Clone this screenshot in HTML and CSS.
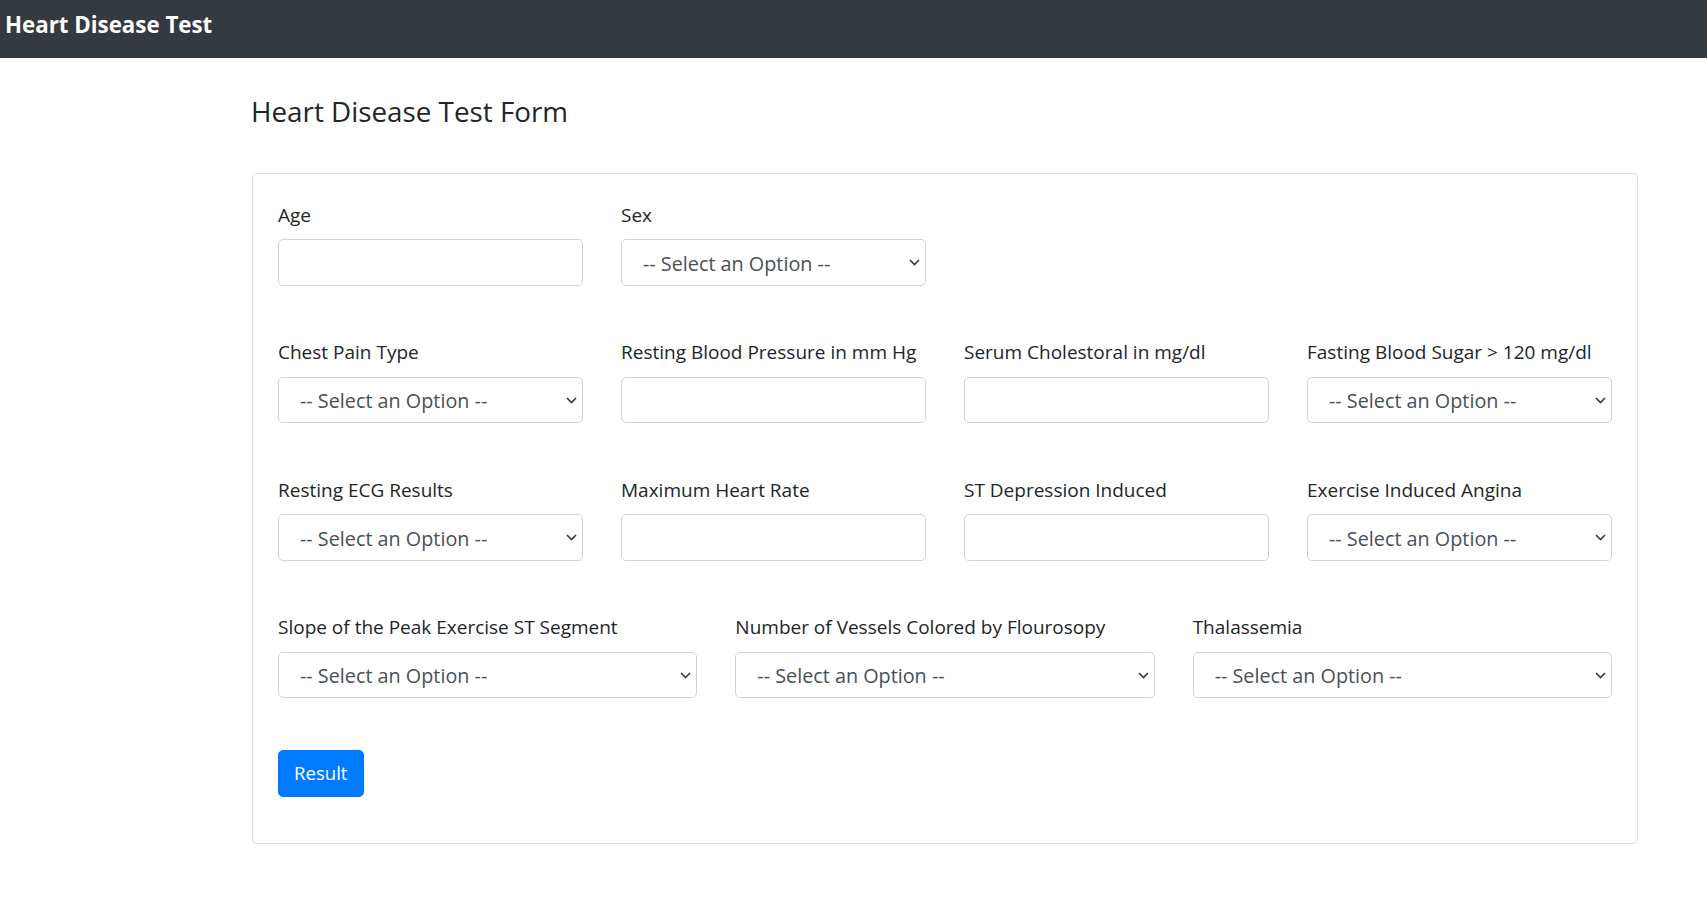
FILE: index.html
```html
<!DOCTYPE html>
<html lang="en">
<head>
<meta charset="utf-8">
<title>Heart Disease Test</title>
<link rel="stylesheet" href="styles.css">
</head>
<body>
<nav class="navbar"><a class="brand">Heart Disease Test</a></nav>
<main class="page">
  <h3 class="page-title">Heart Disease Test Form</h3>
  <div class="card">
    <form class="card-body">
      <div class="form-row">
        <div class="field"><label>Age</label><input class="control" type="text"></div>
        <div class="field"><label>Sex</label>
          <div class="select-wrap"><select class="control select"><option>-- Select an Option --</option></select><svg class="chev" width="11" height="7" viewBox="0 0 11 7"><polyline points="1,1 5.5,5.5 10,1" fill="none" stroke="#343a40" stroke-width="1.6"/></svg></div>
        </div>
      </div>
      <div class="form-row">
        <div class="field"><label>Chest Pain Type</label>
          <div class="select-wrap"><select class="control select"><option>-- Select an Option --</option></select><svg class="chev" width="11" height="7" viewBox="0 0 11 7"><polyline points="1,1 5.5,5.5 10,1" fill="none" stroke="#343a40" stroke-width="1.6"/></svg></div>
        </div>
        <div class="field"><label>Resting Blood Pressure in mm Hg</label><input class="control" type="text"></div>
        <div class="field"><label>Serum Cholestoral in mg/dl</label><input class="control" type="text"></div>
        <div class="field"><label>Fasting Blood Sugar &gt; 120 mg/dl</label>
          <div class="select-wrap"><select class="control select"><option>-- Select an Option --</option></select><svg class="chev" width="11" height="7" viewBox="0 0 11 7"><polyline points="1,1 5.5,5.5 10,1" fill="none" stroke="#343a40" stroke-width="1.6"/></svg></div>
        </div>
      </div>
      <div class="form-row">
        <div class="field"><label>Resting ECG Results</label>
          <div class="select-wrap"><select class="control select"><option>-- Select an Option --</option></select><svg class="chev" width="11" height="7" viewBox="0 0 11 7"><polyline points="1,1 5.5,5.5 10,1" fill="none" stroke="#343a40" stroke-width="1.6"/></svg></div>
        </div>
        <div class="field"><label>Maximum Heart Rate</label><input class="control" type="text"></div>
        <div class="field"><label>ST Depression Induced</label><input class="control" type="text"></div>
        <div class="field"><label>Exercise Induced Angina</label>
          <div class="select-wrap"><select class="control select"><option>-- Select an Option --</option></select><svg class="chev" width="11" height="7" viewBox="0 0 11 7"><polyline points="1,1 5.5,5.5 10,1" fill="none" stroke="#343a40" stroke-width="1.6"/></svg></div>
        </div>
      </div>
      <div class="form-row cols-3 last">
        <div class="field"><label>Slope of the Peak Exercise ST Segment</label>
          <div class="select-wrap"><select class="control select"><option>-- Select an Option --</option></select><svg class="chev" width="11" height="7" viewBox="0 0 11 7"><polyline points="1,1 5.5,5.5 10,1" fill="none" stroke="#343a40" stroke-width="1.6"/></svg></div>
        </div>
        <div class="field"><label>Number of Vessels Colored by Flourosopy</label>
          <div class="select-wrap"><select class="control select"><option>-- Select an Option --</option></select><svg class="chev" width="11" height="7" viewBox="0 0 11 7"><polyline points="1,1 5.5,5.5 10,1" fill="none" stroke="#343a40" stroke-width="1.6"/></svg></div>
        </div>
        <div class="field"><label>Thalassemia</label>
          <div class="select-wrap"><select class="control select"><option>-- Select an Option --</option></select><svg class="chev" width="11" height="7" viewBox="0 0 11 7"><polyline points="1,1 5.5,5.5 10,1" fill="none" stroke="#343a40" stroke-width="1.6"/></svg></div>
        </div>
      </div>
      <button class="btn" type="button">Result</button>
    </form>
  </div>
</main>
</body>
</html>
```
FILE: styles.css
```css
html, body {
  margin: 0;
  padding: 0;
  background: #fff;
}
body {
  font-family: "Open Sans", "Noto Sans", sans-serif;
  color: #212529;
}
.navbar {
  box-sizing: border-box;
  height: 57.7px;
  padding: 8.5px 0 0 5px;
  background: #343a40;
}
.brand {
  display: block;
  font-size: 22.3px;
  line-height: 32px;
  font-weight: 700;
  color: #fff;
  text-decoration: none;
}
.page {
  padding: 36px 0 0 252px;
}
.page-title {
  margin: 0 0 45.2px -1px;
  font-size: 27.8px;
  line-height: 34px;
  font-weight: 400;
  color: #212529;
}
.card {
  box-sizing: border-box;
  width: 1386px;
  border: 1px solid rgba(0, 0, 0, 0.125);
  border-radius: 5px;
  background: #fff;
}
.card-body {
  display: block;
  padding: 27px 25px 46.5px;
}
.form-row {
  display: grid;
  grid-template-columns: repeat(4, 1fr);
  column-gap: 38px;
  margin-bottom: 52.5px;
}
.form-row.cols-3 {
  grid-template-columns: repeat(3, 1fr);
}
.form-row.last {
  margin-bottom: 52.3px;
}
.field label {
  display: block;
  font-size: 19px;
  line-height: 28px;
  margin-bottom: 10.5px;
  color: #212529;
  white-space: nowrap;
}
.control {
  display: block;
  box-sizing: border-box;
  width: 100%;
  height: 46.4px;
  margin: 0;
  border: 1px solid #ced4da;
  border-radius: 5px;
  background: #fff;
  font-family: inherit;
  font-size: 19.8px;
  color: #495057;
  outline: none;
}
.select-wrap {
  position: relative;
}
.select {
  appearance: none;
  -webkit-appearance: none;
  padding: 2px 36px 0 21px;
}
.chev {
  position: absolute;
  right: 6px;
  top: 20px;
  pointer-events: none;
}
.btn {
  display: block;
  box-sizing: border-box;
  height: 46.5px;
  padding: 0 15px;
  font-family: inherit;
  font-size: 18.6px;
  line-height: 28px;
  color: #fff;
  background: #007bff;
  border: 1px solid #007bff;
  border-radius: 5px;
}
```
